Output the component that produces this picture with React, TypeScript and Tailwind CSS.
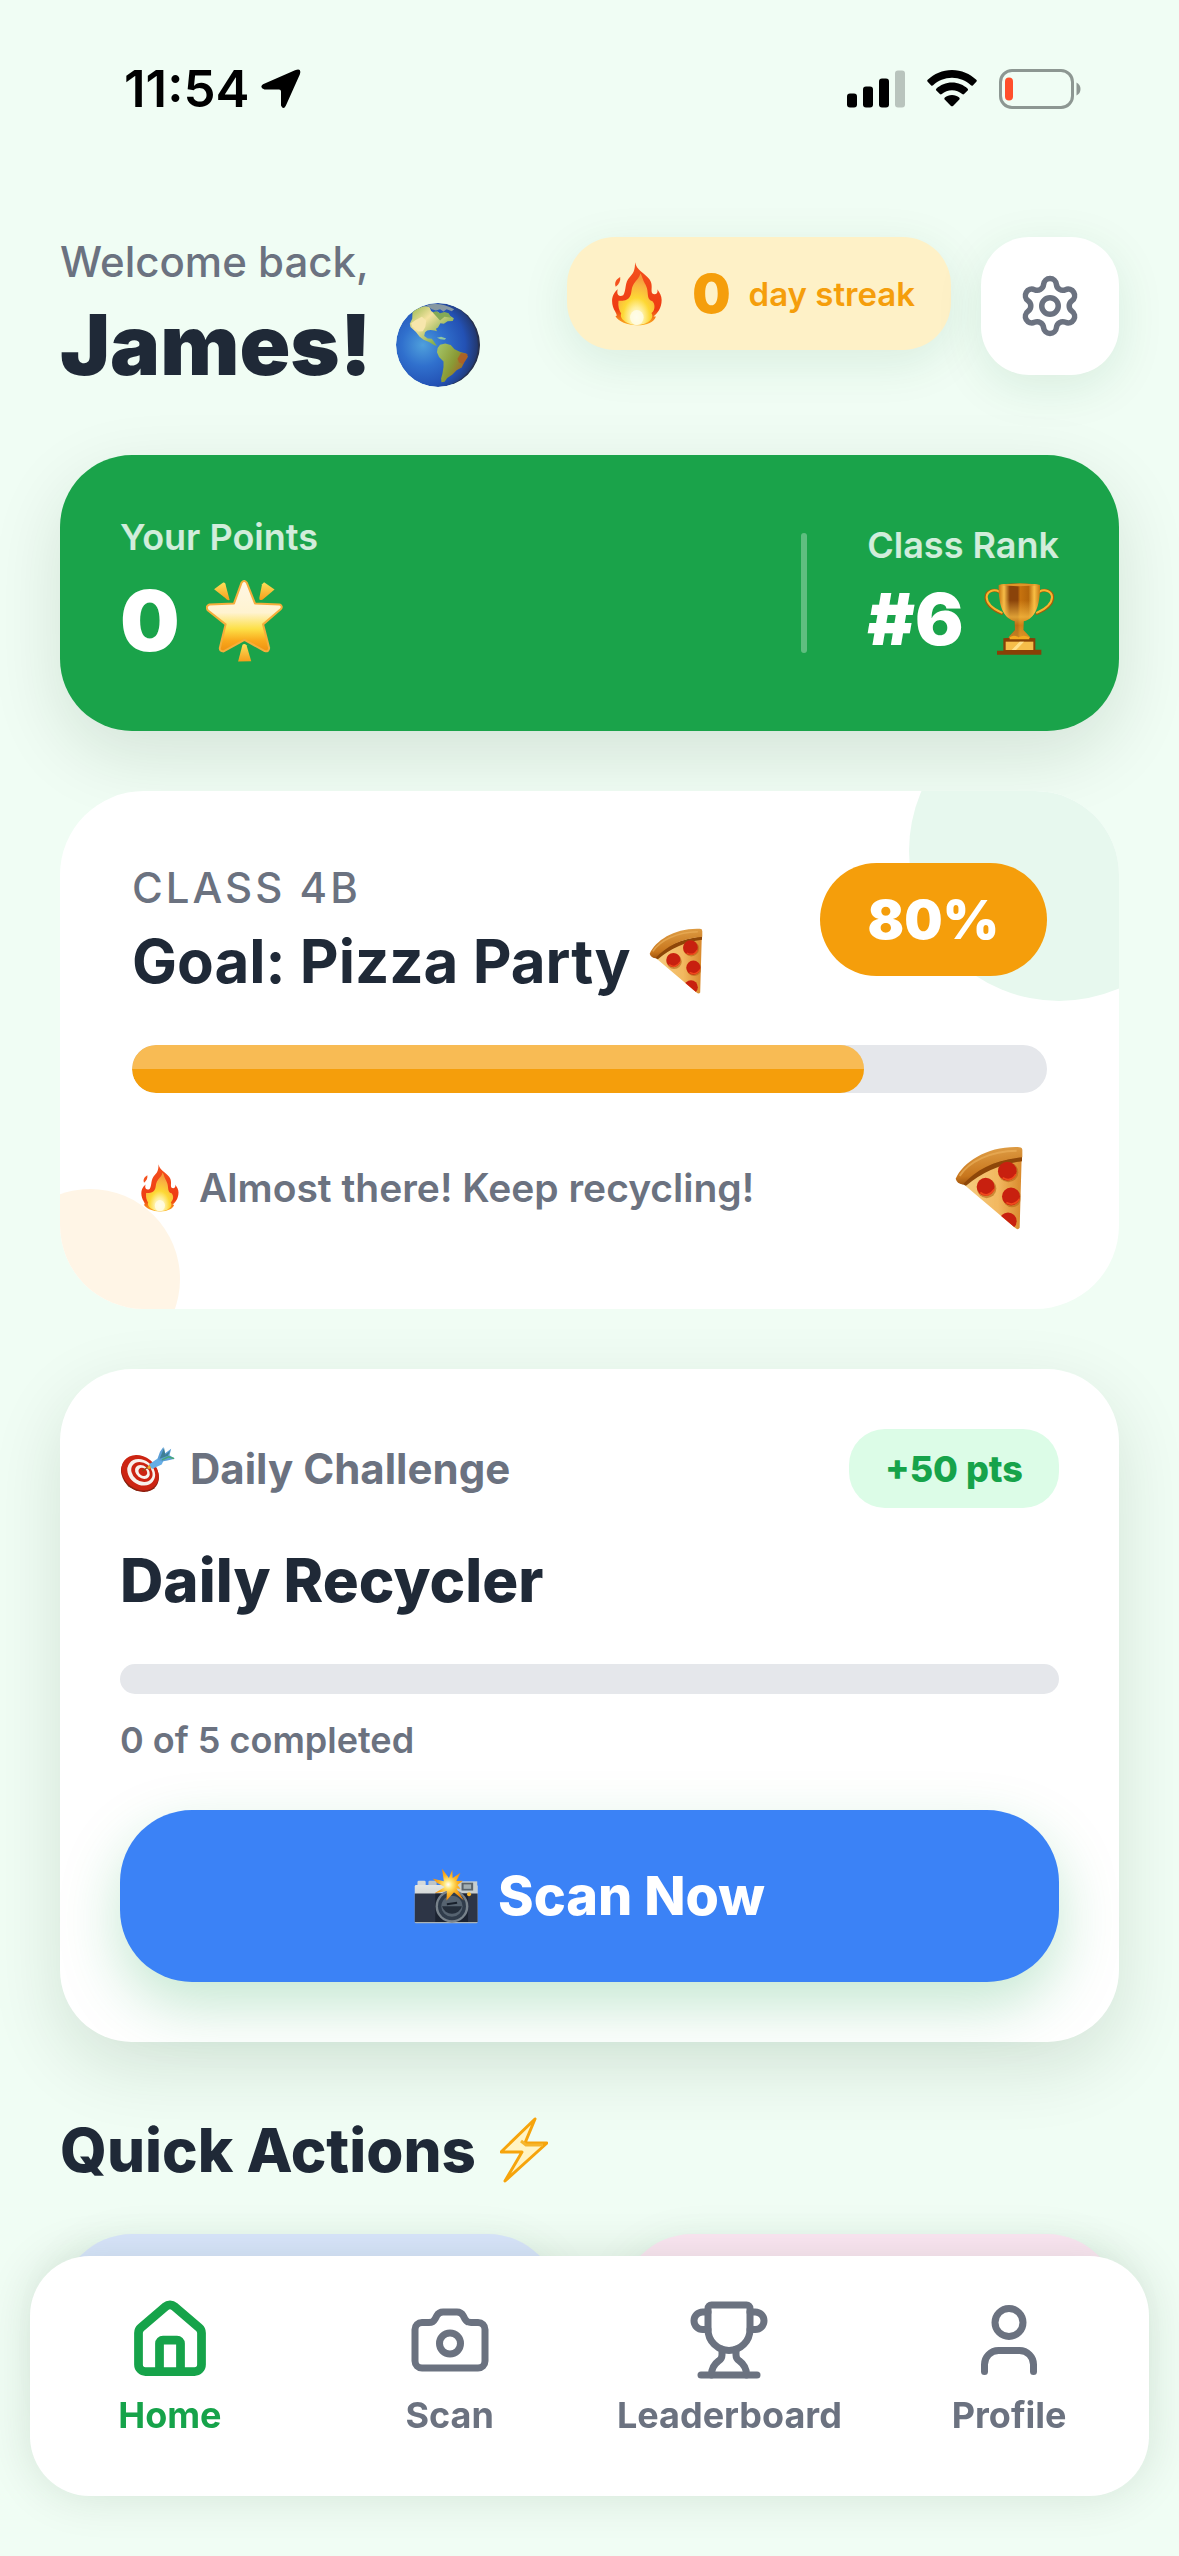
import type { ReactNode } from 'react'
import { Camera, House, Settings, Trophy, User } from 'lucide-react'
import clsx from 'clsx'

interface EmojiProps {
  className?: string
}

function FireEmoji({ className }: EmojiProps) {
  return (
    <svg viewBox="80 37 147 188" className={className} aria-hidden="true">
      <defs>
        <radialGradient id="fire-core" cx="0.5" cy="0.85" r="0.75">
          <stop offset="0" stopColor="#fffdf0" />
          <stop offset="0.25" stopColor="#fff0a0" />
          <stop offset="0.5" stopColor="#fdd835" />
          <stop offset="0.85" stopColor="#f9b040" />
          <stop offset="1" stopColor="#f59a3c" />
        </radialGradient>
        <linearGradient id="fire-outer" x1="0" y1="0" x2="0" y2="1">
          <stop offset="0" stopColor="#f4511e" />
          <stop offset="0.75" stopColor="#ee3b12" />
          <stop offset="1" stopColor="#fbb320" />
        </linearGradient>
      </defs>
      <path d="M104 81C92 88 86 98 91 110C101 102 106 92 104 81Z" fill="#f4511e" />
      <path
        d="M148 38C147 57 146 68 133 80C116 97 123 119 113 135C101 141 92 133 97 117C72 138 80 166 89 182C93 190 97 196 90 196C98 212 125 223 154 223C184 223 204 213 209 197L202 197C212 190 226 174 226 149C226 136 220 127 213 117C217 130 206 136 198 129C193 119 202 104 190 88C175 69 151 60 148 38Z"
        fill="url(#fire-outer)"
      />
      <path
        d="M163 70C162 84 149 91 142 105C134 119 141 137 124 147C112 153 103 150 99 151C97 168 101 180 107 188C100 205 128 222 154 222C181 222 207 206 196 187C208 178 207 160 199 152C189 150 186 143 185 129C184 106 174 100 171 88C168 81 168 76 163 70Z"
        fill="url(#fire-core)"
      />
      <ellipse cx="153" cy="200" rx="20" ry="22" fill="#fffce8" opacity="0.8" />
    </svg>
  )
}

function GlobeEmoji({ className }: EmojiProps) {
  return (
    <svg viewBox="49 73 244 244" className={className} aria-hidden="true">
      <defs>
        <radialGradient id="globe-sea" cx="0.32" cy="0.5" r="0.72">
          <stop offset="0" stopColor="#4fa0dc" />
          <stop offset="0.35" stopColor="#3070cd" />
          <stop offset="0.7" stopColor="#2351b4" />
          <stop offset="1" stopColor="#222c4e" />
        </radialGradient>
        <linearGradient id="globe-land" x1="0" y1="0" x2="1" y2="1">
          <stop offset="0" stopColor="#8fb548" />
          <stop offset="0.35" stopColor="#f5e3a0" />
          <stop offset="0.7" stopColor="#8db355" />
          <stop offset="1" stopColor="#5f8a3c" />
        </linearGradient>
        <linearGradient id="globe-south" x1="0" y1="0" x2="1" y2="0.6">
          <stop offset="0" stopColor="#a6c76a" />
          <stop offset="0.6" stopColor="#8a9a35" />
          <stop offset="1" stopColor="#a85a24" />
        </linearGradient>
        <clipPath id="globe-clip">
          <circle cx="171" cy="195" r="122" />
        </clipPath>
      </defs>
      <g clipPath="url(#globe-clip)">
        <circle cx="171" cy="195" r="122" fill="url(#globe-sea)" />
        <path
          d="M97 99C116 84 134 79 146 84L151 96L163 104L170 98L180 109L196 104L217 117L214 125L199 126L188 133L178 132L171 144L165 148L168 155L160 153C150 150 138 151 133 159L131 169L141 176L153 177L161 188L168 198L159 195L145 186L129 180L117 170L107 157L91 143L89 133L96 119Z"
          fill="url(#globe-land)"
        />
        <path d="M105 123L124 113L137 124L134 143L127 155L114 156L96 141L93 132Z" fill="#f7e6ac" />
        <path d="M138 79C165 72 193 77 218 91L211 97L196 91L187 98L177 91L165 95L153 91L146 86Z" fill="#8798a2" />
        <path d="M155 100L166 97L177 103L190 99L202 103L210 116L190 113L177 124L165 111Z" fill="#83a957" />
        <path d="M168 174L180 171L195 176L190 180L178 178Z" fill="#90c6a0" />
        <path
          d="M177 194L192 191L208 195L219 207L236 215L253 220L258 229L248 244L240 260L225 268L213 281L198 291L190 302L181 303L180 292L184 278L187 259L187 243L174 230L168 216L170 204Z"
          fill="url(#globe-south)"
        />
        <path d="M238 218L257 221L254 235L244 250L232 246L228 235Z" fill="#b05b25" opacity="0.8" />
        <path d="M226 87C262 108 286 145 287 196C288 249 250 294 210 309C254 306 298 260 298 195C298 134 267 97 226 87Z" fill="#292f42" opacity="0.7" />
      </g>
    </svg>
  )
}

function StarEmoji({ className }: EmojiProps) {
  return (
    <svg viewBox="48 63 228 242" className={className} aria-hidden="true">
      <defs>
        <linearGradient id="star-body" x1="0" y1="0" x2="0" y2="1">
          <stop offset="0" stopColor="#fff7e5" />
          <stop offset="0.45" stopColor="#fff3d0" />
          <stop offset="0.68" stopColor="#fde047" />
          <stop offset="0.85" stopColor="#f9a81c" />
          <stop offset="1" stopColor="#ee9111" />
        </linearGradient>
        <linearGradient id="star-ray" x1="0" y1="0" x2="0" y2="1">
          <stop offset="0" stopColor="#fde05a" />
          <stop offset="1" stopColor="#f59e1b" />
        </linearGradient>
      </defs>
      <path
        d="M153 71Q161 60 169 71L193 132L266 135Q277 141 269 149L217 194L235 264Q234 276 222 273L162 240L100 274Q88 274 89 264L106 194L53 152Q46 140 58 135L131 132Z"
        fill="url(#star-body)"
        stroke="#f5ae3b"
        strokeWidth="6"
        strokeLinejoin="round"
      />
      <g fill="url(#star-ray)">
        <path d="M72 90Q85 80 99 70Q106 69 107 80L118 122Q110 124 105 116Z" />
        <path d="M220 69L251 91L216 120Q204 126 206 115L214 75Z" />
        <path d="M156 254Q162 249 168 256L182 303L143 304Z" />
      </g>
    </svg>
  )
}

function TrophyEmoji({ className }: EmojiProps) {
  return (
    <svg viewBox="68 74 210 218" className={className} aria-hidden="true">
      <defs>
        <linearGradient id="trophy-cup" x1="0" x2="1" y1="0" y2="0">
          <stop offset="0" stopColor="#c77510" />
          <stop offset="0.13" stopColor="#f8bd48" />
          <stop offset="0.27" stopColor="#8a430a" />
          <stop offset="0.46" stopColor="#8a430a" />
          <stop offset="0.52" stopColor="#c6720e" />
          <stop offset="0.72" stopColor="#b4650a" />
          <stop offset="0.86" stopColor="#f9be44" />
          <stop offset="1" stopColor="#c67a14" />
        </linearGradient>
        <linearGradient id="trophy-shine" x1="0" x2="0" y1="0" y2="1">
          <stop offset="0.3" stopColor="#f9be44" stopOpacity="0" />
          <stop offset="0.6" stopColor="#f9be44" stopOpacity="0.75" />
          <stop offset="0.75" stopColor="#d98a1c" stopOpacity="0.6" />
          <stop offset="1" stopColor="#f9be44" stopOpacity="0.5" />
        </linearGradient>
      </defs>
      <g fill="none" strokeLinecap="round">
        <path d="M114 102C98 91 75 99 74 117C73 141 98 156 121 166" stroke="#a75b0b" strokeWidth="9" />
        <path d="M234 102C250 91 273 99 274 117C275 141 250 156 227 166" stroke="#a75b0b" strokeWidth="9" />
        <path d="M114 101C98 92 77 99 76 117C76 139 99 154 121 164" stroke="#f9b52f" strokeWidth="6" />
        <path d="M234 101C250 92 271 99 272 117C272 139 249 154 227 164" stroke="#f9b52f" strokeWidth="6" />
      </g>
      <g fill="url(#trophy-cup)">
        <path d="M112 81C132 75 216 75 236 81C237 137 224 181 187 190L186 216L205 236L208 244H140L144 235L161 216L160 190C123 179 111 137 112 81Z" />
      </g>
      <path
        d="M112 81C132 75 216 75 236 81C237 137 224 181 187 190L186 216L205 236L208 244H140L144 235L161 216L160 190C123 179 111 137 112 81Z"
        fill="url(#trophy-shine)"
      />
      <path d="M113 81Q174 72 236 81Q174 88 113 81Z" fill="#e09427" />
      <path d="M126 241Q174 236 222 241V275H240V290H107V278H126Z" fill="#884006" />
      <path d="M133 251H216V276H133Z" fill="#f6bd49" />
      <path d="M151 276L175 251H188L164 276Z" fill="#ffe08b" />
      <path d="M145 238Q157 228 172 238Q187 228 204 238V244H145Z" fill="#f5a91f" />
    </svg>
  )
}

function PizzaEmoji({ className }: EmojiProps) {
  return (
    <svg viewBox="46 47 204 251" className={className} aria-hidden="true">
      <defs>
        <linearGradient id="pizza-cheese" x1="0" y1="0" x2="1" y2="0">
          <stop offset="0" stopColor="#f5cc80" />
          <stop offset="0.6" stopColor="#f2b860" />
          <stop offset="1" stopColor="#d98a2d" />
        </linearGradient>
        <linearGradient id="pizza-crust" x1="0.4" y1="0" x2="0.6" y2="1">
          <stop offset="0" stopColor="#e0a048" />
          <stop offset="0.7" stopColor="#c8761d" />
          <stop offset="1" stopColor="#914606" />
        </linearGradient>
        <clipPath id="pizza-clip">
          <path d="M70 160Q140 95 246 80L240 292Q235 300 226 292Z" />
        </clipPath>
      </defs>
      <path d="M70 160Q140 95 246 80L240 292Q235 300 226 292Z" fill="url(#pizza-cheese)" />
      <path d="M62 158Q128 92 247 78V92Q150 105 79 166Z" fill="#8e4709" />
      <path d="M48 145C71 93 145 46 239 50Q249 50 248 61V80C164 88 112 116 69 162Q52 160 48 145Z" fill="url(#pizza-crust)" />
      <path d="M60 136C88 94 151 62 231 61" stroke="#e9ae58" strokeWidth="6" fill="none" opacity="0.7" />
      <g clipPath="url(#pizza-clip)" fill="#c8200f">
        <g fill="#b56416" opacity="0.6">
          <circle cx="141" cy="174" r="29" />
          <circle cx="206" cy="125" r="30" />
          <circle cx="217" cy="202" r="28" />
        </g>
        <circle cx="138" cy="169" r="27" />
        <circle cx="203" cy="122" r="28" />
        <circle cx="214" cy="198" r="27" />
        <circle cx="205" cy="272" r="26" />
        <path d="M122 186Q145 204 164 176" stroke="#f04a1c" strokeWidth="5" fill="none" />
        <path d="M189 142Q214 156 229 131" stroke="#f04a1c" strokeWidth="5" fill="none" />
        <path d="M200 216Q224 229 239 205" stroke="#f04a1c" strokeWidth="5" fill="none" />
      </g>
    </svg>
  )
}

function TargetEmoji({ className }: EmojiProps) {
  return (
    <svg viewBox="37 28 163 136" className={className} aria-hidden="true">
      <path d="M46 128L60 148L84 160L118 162L140 152L120 150Z" fill="#6d4a1c" />
      <g transform="rotate(38 95 107)">
        <ellipse cx="97" cy="110" rx="60" ry="49" fill="#8f1f10" />
        <ellipse cx="95" cy="107" rx="59" ry="48" fill="#cc2412" />
        <ellipse cx="97" cy="104" rx="44" ry="36" fill="#f8f1ec" />
        <ellipse cx="98" cy="102" rx="34" ry="27" fill="#cc2412" />
        <ellipse cx="99" cy="101" rx="24" ry="18" fill="#f8f1ec" />
        <ellipse cx="100" cy="100" rx="14" ry="11" fill="#cc2412" />
      </g>
      <path d="M103 101L127 84" stroke="#8a4a14" strokeWidth="4" strokeLinecap="round" />
      <path d="M116 91L127 81L132 90L121 97Z" fill="#f0a826" />
      <path d="M122 82L146 66Q160 62 164 72L159 83L130 96Z" fill="#66aee6" />
      <path d="M146 67L154 45L164 31L168 50L187 36L182 55L198 66L176 71L160 74Z" fill="#5b9ed6" />
      <path d="M153 66L166 34L170 54L184 42L177 57Z" fill="#3f7f95" />
      <path d="M160 69L179 60L195 65" stroke="#47a874" strokeWidth="4" fill="none" />
    </svg>
  )
}

function CameraEmoji({ className }: EmojiProps) {
  return (
    <svg viewBox="34 53 187 164" className={className} aria-hidden="true">
      <defs>
        <linearGradient id="camera-top" x1="0" y1="0" x2="0" y2="1">
          <stop offset="0" stopColor="#e2e5e3" />
          <stop offset="1" stopColor="#a9b2b5" />
        </linearGradient>
        <radialGradient id="camera-flash">
          <stop offset="0" stopColor="#ffffff" />
          <stop offset="0.25" stopColor="#ffe87a" />
          <stop offset="0.6" stopColor="#fbb324" />
          <stop offset="1" stopColor="#f28a0c" />
        </radialGradient>
      </defs>
      <rect x="44" y="90" width="24" height="18" rx="4" fill="#d4d9da" />
      <rect x="76" y="90" width="24" height="18" rx="4" fill="#bcc4c8" />
      <rect x="36" y="103" width="184" height="112" rx="4" fill="url(#camera-top)" />
      <path d="M158 92H219V130H158Z" fill="#c8cfd0" />
      <path d="M36 128H220V211H36Z" fill="#2d3546" />
      <path d="M96 128H192V211H96Z" fill="#1b2230" />
      <rect x="173" y="96" width="34" height="23" fill="#59646c" />
      <rect x="179" y="101" width="22" height="13" fill="#a2aeb2" />
      <circle cx="145" cy="165" r="48" fill="#78828b" />
      <circle cx="145" cy="165" r="41" fill="#303c4b" />
      <circle cx="145" cy="165" r="31" fill="#566370" />
      <path d="M116 165A30 30 0 0 0 174 165Z" fill="#242e3b" />
      <path d="M130 159L160 155" stroke="#18202c" strokeWidth="6" />
      <circle cx="195" cy="130" r="6" fill="#f8b72e" />
      <path
        d="M146 58L147 82L170 67L158 91L177 90L161 103L170 114L158 113L180 148L151 124L129 148L130 120L94 127L124 109L102 97L88 84L121 92L116 55L136 82Z"
        fill="url(#camera-flash)"
      />
    </svg>
  )
}

function BoltEmoji({ className }: EmojiProps) {
  return (
    <svg viewBox="0 0 48 66" className={className} aria-hidden="true">
      <path
        d="M35 2L1 35H22L5 64L47 26H25Z"
        fill="#fff4c4"
        stroke="#f6a40c"
        strokeWidth="3"
        strokeLinejoin="round"
      />
      <path d="M21 24L26 28H43" stroke="#f6b52c" strokeWidth="3" fill="none" />
    </svg>
  )
}

function StatusBar() {
  return (
    <div className="flex h-[177px] items-center justify-between pl-[124px] pr-[98px]">
      <div className="flex items-center gap-[12px] text-black">
        <span className="text-[51px] font-semibold leading-[60px]">11:54</span>
        <svg viewBox="0 0 40 40" className="h-[40px] w-[40px]" aria-hidden="true">
          <path d="M34 1.2Q41-1.5 38.8 5.5L24.8 36.8Q22.4 41.5 20 36.5V22.5Q20 20.5 18 20.5H3.5Q-2 18.5 2 15.2Z" fill="currentColor" />
        </svg>
      </div>
      <div className="flex items-center gap-[22px]">
        <svg viewBox="0 0 58 38" className="h-[38px] w-[58px]" aria-hidden="true">
          <rect x="0" y="23.5" width="10" height="14" rx="3" />
          <rect x="16" y="16.5" width="10" height="21" rx="3" />
          <rect x="32" y="8.5" width="10" height="29" rx="3" />
          <rect x="48" y="0.5" width="10" height="37" rx="3" fill="#b9c4bd" />
        </svg>
        <svg viewBox="0 0 50 37" className="h-[37px] w-[50px]" aria-hidden="true">
          <path d="M25 0C34.5 0 43 3.8 49.3 9.8Q50.3 10.8 49.3 11.8L45.8 15.4Q44.9 16.2 43.9 15.3C38.8 10.6 32.3 7.8 25 7.8S11.2 10.6 6.1 15.3Q5.1 16.2 4.2 15.4L0.7 11.8Q-0.3 10.8 0.7 9.8C7 3.8 15.5 0 25 0Z" />
          <path d="M25 12.5C31.1 12.5 36.6 14.9 40.7 18.7Q41.6 19.7 40.7 20.6L37.1 24.1Q36.2 24.9 35.2 24.1C32.4 21.7 28.9 20.2 25 20.2S17.6 21.7 14.8 24.1Q13.8 24.9 12.9 24.1L9.3 20.6Q8.4 19.7 9.3 18.7C13.4 14.9 18.9 12.5 25 12.5Z" />
          <path d="M25 25C27.8 25 30.3 26 32.2 27.6Q33.2 28.5 32.3 29.5L26 35.9Q25 36.8 24 35.9L17.7 29.5Q16.8 28.5 17.8 27.6C19.7 26 22.2 25 25 25Z" />
        </svg>
        <svg viewBox="0 0 82 40" className="h-[40px] w-[82px]" aria-hidden="true">
          <rect x="1.5" y="1.5" width="72" height="37" rx="11.5" fill="none" stroke="#8d9792" strokeWidth="3" />
          <path d="M77.5 13.5Q81.5 15.5 81.5 20T77.5 26.5Z" fill="#8d9792" />
          <rect x="6" y="8.5" width="8" height="23" rx="4" fill="#ff4f2b" />
        </svg>
      </div>
    </div>
  )
}

function Header() {
  return (
    <header className="flex items-start justify-between">
      <div className="flex flex-col gap-2">
        <p className="text-[42px] font-medium leading-[50px] text-[#6b7280]">Welcome back,</p>
        <h1 className="flex items-center gap-[24px] text-[84px] font-black leading-[100px] text-[#1f2937]">
          James!
          <GlobeEmoji className="h-[84px] w-[84px]" />
        </h1>
      </div>
      <div className="flex items-start gap-[30px]">
        <div className="flex h-[113px] items-center rounded-[48px] bg-[#fef1c7] pl-[45px] pr-[36px] text-[#f59e0b] shadow-[0_12px_48px_rgba(22,101,52,0.1)]">
          <FireEmoji className="mr-[30px] h-[64px] w-[50px]" />
          <span className="mr-[18px] text-[54px] font-black leading-[66px]">0</span>
          <span className="text-[33px] font-semibold leading-[44px]">day streak</span>
        </div>
        <button
          type="button"
          aria-label="Settings"
          className="flex h-[138px] w-[138px] items-center justify-center rounded-[48px] bg-white text-[#6b7280] shadow-[0_12px_48px_rgba(22,101,52,0.1)]"
        >
          <Settings size={66} strokeWidth={2} />
        </button>
      </div>
    </header>
  )
}

function PointsCard() {
  return (
    <section className="flex items-center rounded-[72px] bg-[#1aa34a] p-[60px] text-white shadow-[0_24px_72px_rgba(0,40,20,0.12)]">
      <div className="flex flex-1 flex-col gap-3">
        <p className="text-[36px] font-semibold leading-[44px] text-white/80">Your Points</p>
        <p className="flex items-center gap-[26px] text-[84px] font-black leading-[100px]">
          0
          <StarEmoji className="h-[82px] w-[77px]" />
        </p>
      </div>
      <div className="mr-[60px] h-[120px] w-[6px] rounded-full bg-white/30" />
      <div className="flex flex-col gap-2">
        <p className="text-[36px] font-semibold leading-[44px] text-white/80">Class Rank</p>
        <p className="flex items-center gap-[20px] text-[72px] font-black leading-[88px]">
          #6
          <TrophyEmoji className="h-[74px] w-[70px]" />
        </p>
      </div>
    </section>
  )
}

function GoalCard() {
  const percent = 80

  return (
    <section className="relative overflow-hidden rounded-[84px] bg-white p-[72px]">
      <div className="absolute -right-[90px] -top-[90px] h-[300px] w-[300px] rounded-full bg-[#e7f8ee]" />
      <div className="absolute -bottom-[60px] -left-[60px] h-[180px] w-[180px] rounded-full bg-[#fff5e6]" />
      <div className="relative">
        <div className="flex items-start justify-between">
          <div className="flex flex-col gap-3">
            <p className="text-[42px] font-medium leading-[50px] tracking-[3px] text-[#6b7280]">CLASS 4B</p>
            <h2 className="flex items-center gap-[18px] text-[60px] font-bold leading-[72px] text-[#1f2937]">
              Goal: Pizza Party
              <PizzaEmoji className="h-[66px] w-[54px]" />
            </h2>
          </div>
          <span className="flex h-[113px] items-center rounded-full bg-[#f59e0b] px-[48px] text-[54px] font-black leading-[66px] text-white">
            {percent}%
          </span>
        </div>
        <div
          role="progressbar"
          aria-label="Class goal"
          aria-valuenow={percent}
          className="mt-[48px] h-[48px] overflow-hidden rounded-full bg-[#e5e7eb]"
        >
          <div className="h-full overflow-hidden rounded-full bg-[#f59e0b]" style={{ width: `${percent}%` }}>
            <div className="h-[24px] bg-white/30" />
          </div>
        </div>
        <div className="mt-[46px] flex h-[98px] items-center">
          <FireEmoji className="ml-[9px] mr-[20px] h-[48px] w-[38px]" />
          <p className="text-[39px] font-semibold leading-[48px] text-[#6b7280]">Almost there! Keep recycling!</p>
          <PizzaEmoji className="ml-auto mr-[24px] h-[84px] w-[68px]" />
        </div>
      </div>
    </section>
  )
}

function ChallengeCard() {
  return (
    <section className="rounded-[72px] bg-white p-[60px] shadow-[0_24px_72px_rgba(0,40,20,0.12)]">
      <div className="flex items-center justify-between">
        <p className="flex items-center gap-[14px] text-[42px] font-bold leading-[50px] text-[#6b7280]">
          <TargetEmoji className="h-[46px] w-[56px]" />
          Daily Challenge
        </p>
        <span className="flex h-[79px] items-center rounded-[36px] bg-[#dcfce7] px-[36px] text-[36px] font-extrabold leading-[44px] text-[#16a34a]">
          +50 pts
        </span>
      </div>
      <h2 className="mt-[36px] text-[60px] font-extrabold leading-[72px] text-[#1f2937]">Daily Recycler</h2>
      <div
        role="progressbar"
        aria-label="Daily challenge"
        aria-valuenow={0}
        className="mt-[48px] h-[30px] rounded-full bg-[#e5e7eb]"
      />
      <p className="mt-[24px] text-[36px] font-semibold leading-[44px] text-[#6b7280]">0 of 5 completed</p>
      <button
        type="button"
        className="mt-[48px] flex h-[172px] w-full items-center justify-center gap-[20px] rounded-[72px] bg-[#3b82f6] text-[54px] font-extrabold leading-[66px] text-white shadow-[0_24px_60px_rgba(22,163,74,0.25)]"
      >
        <CameraEmoji className="h-[56px] w-[64px]" />
        Scan Now
      </button>
    </section>
  )
}

function QuickActions() {
  return (
    <section className="pt-3">
      <h2 className="flex items-center gap-[24px] text-[60px] font-extrabold leading-[72px] text-[#1f2937]">
        Quick Actions
        <BoltEmoji className="h-[66px] w-[48px]" />
      </h2>
      <div className="mt-[48px] grid grid-cols-2 gap-[60px]">
        <button
          type="button"
          aria-label="Scan"
          className="h-[200px] rounded-[72px] bg-[#d9e6fc] shadow-[0_12px_48px_rgba(22,101,52,0.1)]"
        />
        <button
          type="button"
          aria-label="Leaderboard"
          className="h-[200px] rounded-[72px] bg-[#fce7f3] shadow-[0_12px_48px_rgba(22,101,52,0.1)]"
        />
      </div>
    </section>
  )
}

interface NavItemProps {
  label: string
  active?: boolean
  children: ReactNode
}

function NavItem({ label, active, children }: NavItemProps) {
  return (
    <a
      href="#"
      aria-current={active ? 'page' : undefined}
      className={clsx(
        'flex flex-1 basis-0 flex-col items-center gap-3',
        active ? 'text-[#16a34a]' : 'text-[#6b7280]'
      )}
    >
      {children}
      <span className="text-[36px] font-bold leading-[42px]">{label}</span>
    </a>
  )
}

function BottomNav() {
  return (
    <nav className="fixed inset-x-[30px] bottom-[60px] flex h-[240px] rounded-[60px] bg-white pt-[42px] shadow-[0_0_48px_rgba(0,40,20,0.12)]">
      <NavItem label="Home" active>
        <House size={84} strokeWidth={2.5} />
      </NavItem>
      <NavItem label="Scan">
        <Camera size={84} strokeWidth={2} />
      </NavItem>
      <NavItem label="Leaderboard">
        <Trophy size={84} strokeWidth={2} />
      </NavItem>
      <NavItem label="Profile">
        <User size={84} strokeWidth={2} />
      </NavItem>
    </nav>
  )
}

export default function App() {
  return (
    <div className="min-h-screen bg-[#f0fdf4] font-['Inter',sans-serif]">
      <StatusBar />
      <main className="flex flex-col gap-[60px] px-[60px] pb-[60px] pt-[60px]">
        <Header />
        <PointsCard />
        <GoalCard />
        <ChallengeCard />
        <QuickActions />
      </main>
      <BottomNav />
    </div>
  )
}
